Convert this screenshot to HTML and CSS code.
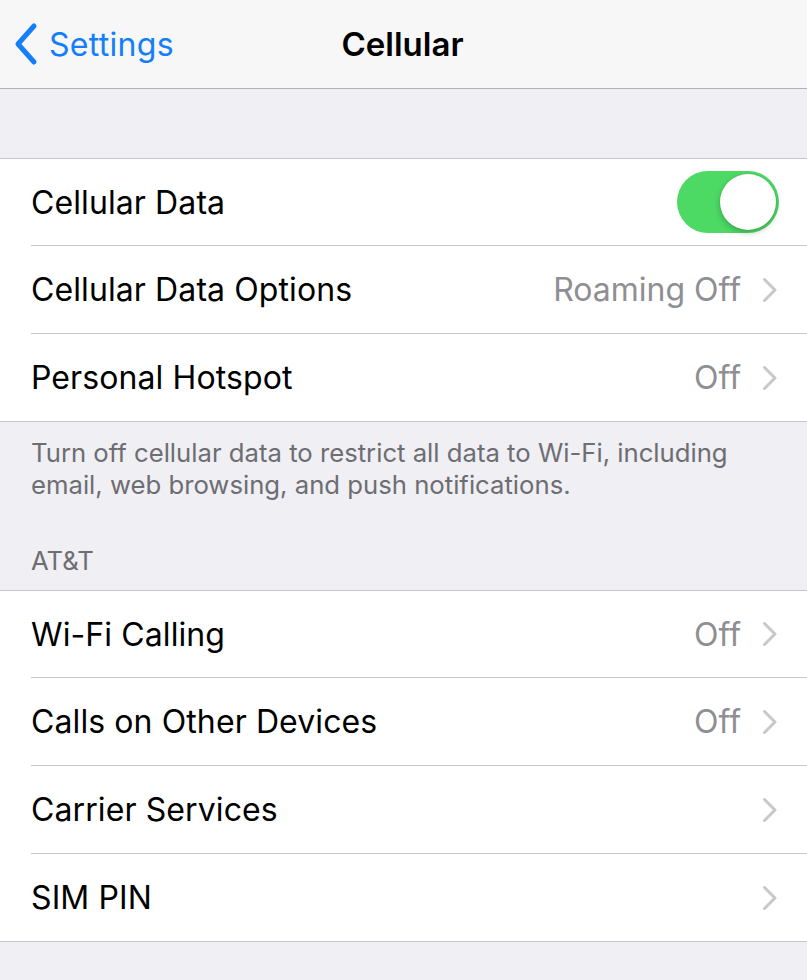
FILE: index.html
```html
<!DOCTYPE html>
<html>
<head>
<meta charset="utf-8">
<link rel="stylesheet" href="styles.css">
</head>
<body>
<header class="nav">
  <a class="back">
    <svg class="back-icon" width="28" height="44" viewBox="0 0 28 44"><path d="M22 4 L6 22 L22 40" fill="none" stroke="#147efb" stroke-width="5" stroke-linecap="round" stroke-linejoin="round"/></svg>
    <span>Settings</span>
  </a>
  <h1 class="title">Cellular</h1>
</header>
<div class="spacer"></div>
<section class="group">
  <div class="row">
    <span class="label">Cellular Data</span>
    <span class="switch"><span class="knob"></span></span>
  </div>
  <div class="row">
    <span class="label">Cellular Data Options</span>
    <span class="value">Roaming Off</span>
    <svg class="chev" width="16" height="26" viewBox="0 0 16 26"><path d="M2.5 2.5 L13 13 L2.5 23.5" fill="none" stroke="#c7c7cc" stroke-width="3" stroke-linecap="round" stroke-linejoin="round"/></svg>
  </div>
  <div class="row">
    <span class="label">Personal Hotspot</span>
    <span class="value">Off</span>
    <svg class="chev" width="16" height="26" viewBox="0 0 16 26"><path d="M2.5 2.5 L13 13 L2.5 23.5" fill="none" stroke="#c7c7cc" stroke-width="3" stroke-linecap="round" stroke-linejoin="round"/></svg>
  </div>
</section>
<p class="footer">Turn off cellular data to restrict all data to Wi-Fi, including email, web browsing, and push notifications.</p>
<h2 class="section-header">AT&amp;T</h2>
<section class="group">
  <div class="row">
    <span class="label">Wi-Fi Calling</span>
    <span class="value">Off</span>
    <svg class="chev" width="16" height="26" viewBox="0 0 16 26"><path d="M2.5 2.5 L13 13 L2.5 23.5" fill="none" stroke="#c7c7cc" stroke-width="3" stroke-linecap="round" stroke-linejoin="round"/></svg>
  </div>
  <div class="row">
    <span class="label">Calls on Other Devices</span>
    <span class="value">Off</span>
    <svg class="chev" width="16" height="26" viewBox="0 0 16 26"><path d="M2.5 2.5 L13 13 L2.5 23.5" fill="none" stroke="#c7c7cc" stroke-width="3" stroke-linecap="round" stroke-linejoin="round"/></svg>
  </div>
  <div class="row">
    <span class="label">Carrier Services</span>
    <svg class="chev" width="16" height="26" viewBox="0 0 16 26"><path d="M2.5 2.5 L13 13 L2.5 23.5" fill="none" stroke="#c7c7cc" stroke-width="3" stroke-linecap="round" stroke-linejoin="round"/></svg>
  </div>
  <div class="row">
    <span class="label">SIM PIN</span>
    <svg class="chev" width="16" height="26" viewBox="0 0 16 26"><path d="M2.5 2.5 L13 13 L2.5 23.5" fill="none" stroke="#c7c7cc" stroke-width="3" stroke-linecap="round" stroke-linejoin="round"/></svg>
  </div>
</section>
</body>
</html>
```
FILE: styles.css
```css
* { box-sizing: border-box; }
html, body {
  margin: 0;
  padding: 0;
  background: #efeff4;
  font-family: Inter, "Open Sans", "Liberation Sans", sans-serif;
  -webkit-font-smoothing: antialiased;
}
.nav {
  height: 89px;
  background: #f7f7f7;
  border-bottom: 1px solid #b2b2b2;
  display: flex;
  align-items: center;
  justify-content: center;
  position: relative;
}
.back {
  position: absolute;
  left: 12px;
  top: 22px;
  display: flex;
  align-items: center;
  gap: 9px;
  color: #147efb;
  font-size: 32px;
  letter-spacing: 0.3px;
}
.back-icon { display: block; }
.title {
  margin: 0 0 0 -2px;
  font-size: 33px;
  font-weight: 600;
  color: #000;
}
.spacer { height: 69px; }
.group {
  background: #fff;
  border-top: 1px solid #c8c7cc;
  border-bottom: 1px solid #c8c7cc;
  padding-left: 31px;
}
.row {
  height: 88px;
  display: flex;
  align-items: center;
  padding-right: 29px;
  border-bottom: 1px solid #c8c7cc;
}
.row:first-child { height: 87px; }
.row:last-child { border-bottom: none; height: 87px; }
.label {
  flex: 1;
  font-size: 32px;
  letter-spacing: 0.1px;
  color: #000;
}
.value {
  font-size: 32px;
  color: #8e8e93;
  margin-right: 21px;
}
.chev { display: block; }
.switch {
  width: 102px;
  height: 62px;
  border-radius: 31px;
  background: #4cd964;
  position: relative;
  margin-right: -1px;
}
.knob {
  position: absolute;
  right: 3px;
  top: 3px;
  width: 56px;
  height: 56px;
  border-radius: 50%;
  background: #fff;
  box-shadow: 0 3px 6px rgba(0,0,0,0.22), 0 0 0 1px rgba(0,0,0,0.04);
}
.footer {
  margin: 0;
  padding: 15px 50px 0 31px;
  font-size: 25.7px;
  line-height: 32px;
  color: #6d6d72;
}
.section-header {
  margin: 0;
  padding: 44px 31px 13px;
  font-size: 25.7px;
  line-height: 32px;
  font-weight: 400;
  color: #6d6d72;
}
```
